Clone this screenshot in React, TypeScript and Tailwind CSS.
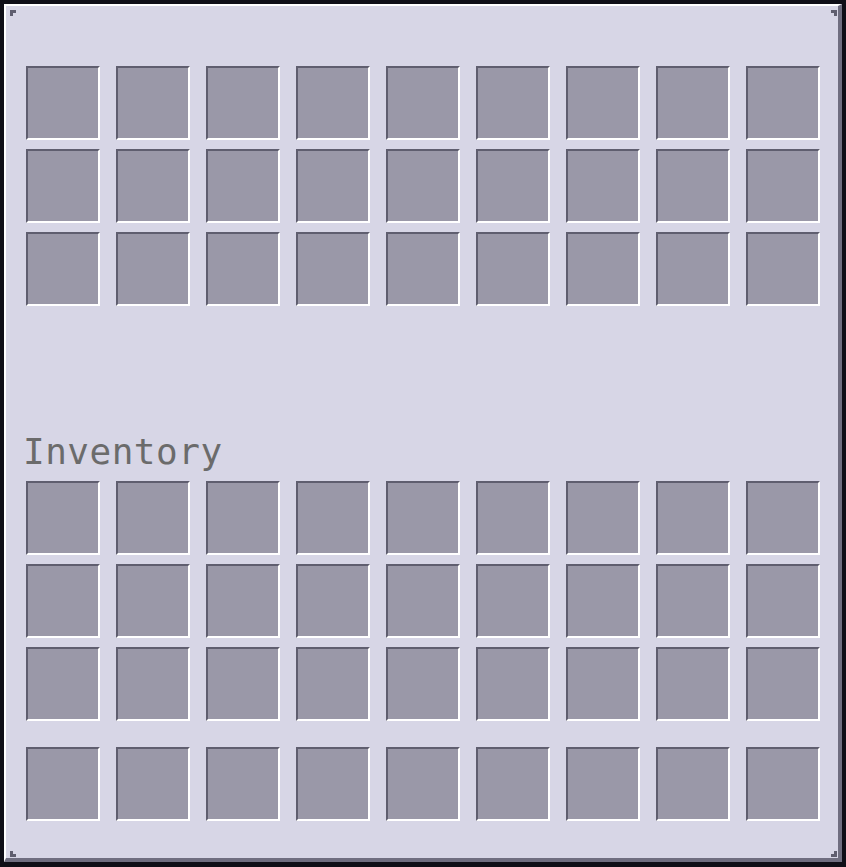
const slots = (n: number) => Array.from({ length: n * 9 }, (_, i) => i);

function Slot() {
  return (
    <div className="w-[74px] h-[74px] bg-[#9a98a8] border-2 border-t-[#5f5e6f] border-l-[#5f5e6f] border-b-white border-r-white" />
  );
}

function SlotGrid({ rows }: { rows: number }) {
  return (
    <div className="grid grid-cols-[repeat(9,74px)] gap-x-[16px] gap-y-[9px]">
      {slots(rows).map(i => (
        <Slot key={i} />
      ))}
    </div>
  );
}

function Corner({ d }: { d: string }) {
  return (
    <svg width="6" height="6" viewBox="0 0 6 6" className="block" shapeRendering="crispEdges">
      <path d={d} fill="#5f5e6f" />
    </svg>
  );
}

export default function App() {
  return (
    <div className="w-[846px] h-[867px] bg-[#0f0f17] pt-[4px] pl-[4px] pr-[4px] pb-[5px]">
      <div className="w-full h-full flex flex-col bg-[#d7d6e6] border-t-2 border-l-2 border-r-4 border-b-4 border-t-white border-l-white border-r-[#6f6e80] border-b-[#6f6e80] pt-[4px] pl-[4px] pr-[1px] pb-[1px]">

        {/* ── top corner marks ── */}
        <div className="flex justify-between">
          <Corner d="M0 0H6V3H3V6H0Z" />
          <Corner d="M0 0H6V6H3V3H0Z" />
        </div>

        <div className="mt-[50px] pl-[16px] flex flex-col">
          {/* ── Container ── */}
          <SlotGrid rows={3} />

          {/* ── Inventory label ── */}
          <p className="mt-[128px] -ml-[3px] h-[36px] leading-[36px] text-[36px] tracking-[0.5px] text-[#6b6b6b] font-['DejaVu_Sans_Mono',monospace]">
            Inventory
          </p>

          <div className="mt-[11px]">
            <SlotGrid rows={3} />
          </div>

          {/* ── Hotbar ── */}
          <div className="mt-[26px]">
            <SlotGrid rows={1} />
          </div>
        </div>

        {/* ── bottom corner marks ── */}
        <div className="mt-auto flex justify-between">
          <Corner d="M0 0H3V3H6V6H0Z" />
          <Corner d="M3 0H6V6H0V3H3Z" />
        </div>
      </div>
    </div>
  );
}
